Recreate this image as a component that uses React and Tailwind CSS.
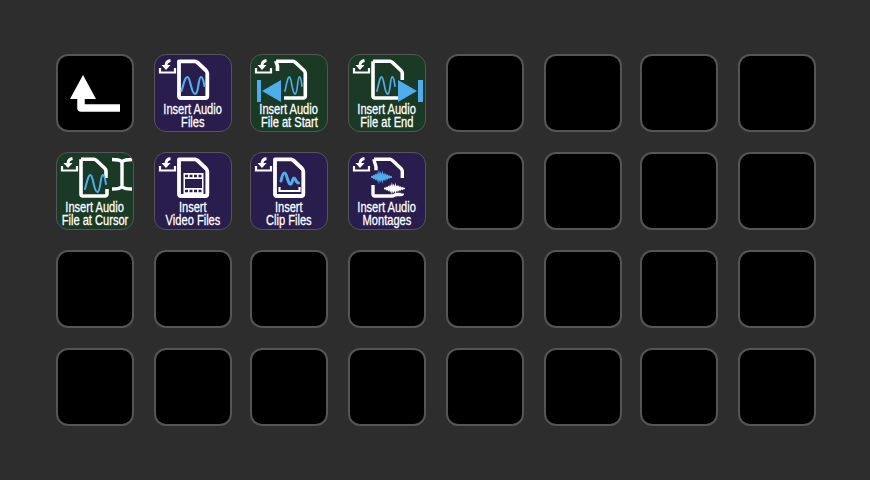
const BLUE = "#4fadee";

function TrayArrow() {
  return (
    <g fill="none" stroke="#fff">
      <path d="M6 14v4.500h15V14" strokeWidth="2.200" />
      <path d="M16.500 6.500c-3 .5-4.500 2-4.500 5" strokeWidth="2.800" />
      <path d="M7.500 11h9l-4.500 5z" fill="#fff" stroke="none" />
    </g>
  );
}

const FILE = "M25 7.300h16c1 0 1.500.3 2.500 1.200l8.500 8c1 1 1.300 1.500 1.300 3V42c0 1.500-1 2-2 2H27c-1 0-2-.5-2-2V10z";

function FileOutline() {
  return <path d={FILE} fill="none" stroke="#fff" strokeWidth="3.800" strokeLinejoin="round" />;
}

function Wave({ x, y, w = 23 }) {
  return (
    <path
      transform={`translate(${x} ${y}) scale(${w / 23} 1)`}
      d="M0 15C2.500 7 3.500 1 6 1c3 0 3.500 17 7.500 17S16.500 1 19.500 1c2 0 2.800 5 3.500 9"
      fill="none"
      stroke={BLUE}
      strokeWidth="2.200"
      strokeLinecap="round"
    />
  );
}

// amplitudes of the little waveform blobs on the montage tile
const SPIKES = [0.5, 1.500, 0.8, 2.500, 1.500, 3.500, 2, 5, 2.500, 7.500, 3, 6, 2.500, 7, 2.500, 4.500, 2, 4, 1.500, 3, 1, 2, 0.8, 1.200, 0.4];

function Spikes({ x, y, w, h = 1, fill }) {
  const step = w / (SPIKES.length - 1);
  const top = SPIKES.map((a, i) => `${x + i * step} ${y - a * h}`);
  const bottom = SPIKES.map((a, i) => `${x + i * step} ${y + a * h}`).reverse();
  return <path d={`M${top.join("L")}L${bottom.join("L")}z`} fill={fill} />;
}

function Canvas({ children, box = "1 1 76 76" }) {
  return (
    <svg viewBox={box} className="absolute inset-0 h-full w-full">
      {children}
    </svg>
  );
}

function AudioFiles() {
  return (
    <Canvas>
      <TrayArrow />
      <FileOutline />
      <Wave x={27.500} y={22} />
    </Canvas>
  );
}

function AtStart() {
  return (
    <Canvas>
      <TrayArrow />
      <path d="M26 7.300h17c1 0 1.500.3 2.500 1.200l8.500 8c1 1 1.300 1.500 1.300 3V42c0 1-1 2-2 2H34" fill="none" stroke="#fff" strokeWidth="3.600" strokeLinejoin="round" />
      <path d="M26 7.300c0 2 1.500 3 1.500 5V17" fill="none" stroke="#fff" strokeWidth="3.600" />
      <Wave x={35} y={22} w={17} />
      <path d="M7 26h4v22H7z" fill={BLUE} />
      <path d="M12 37 31 26v22z" fill={BLUE} />
    </Canvas>
  );
}

function AtEnd() {
  return (
    <Canvas>
      <TrayArrow />
      <path d="M25 7.300h17c1 0 1.500.3 2.500 1.200l8.500 8c1 1 1.300 1.500 1.300 3V26M50 44H27c-1 0-2-.5-2-2V7.300" fill="none" stroke="#fff" strokeWidth="3.600" strokeLinejoin="round" />
      <Wave x={29} y={22} w={18} />
      <path d="M70 26h5v22h-5z" fill={BLUE} />
      <path d="M69 37 50 26v22z" fill={BLUE} />
    </Canvas>
  );
}

function AtCursor() {
  return (
    <Canvas>
      <TrayArrow />
      <path d="M25 7.300h13c1 0 1.500.3 2.500 1.200l8 7.500c1 1 1.500 1.500 1.500 3v7M51 37v5c0 1-1 2-2 2H27c-1 0-2-.5-2-2V7.300" fill="none" stroke="#fff" strokeWidth="3.600" strokeLinejoin="round" />
      <Wave x={29} y={22} w={21} />
      <path d="M56 7.500c5 0 8 0 10 2.500 2-2.500 5-2.500 10-2.500M66 9v26M56 37c5 0 8 0 10-2.500 2 2.500 5 2.500 10 2.500" fill="none" stroke="#fff" strokeWidth="3.400" />
    </Canvas>
  );
}

function VideoFiles() {
  return (
    <Canvas>
      <TrayArrow />
      <FileOutline />
      <rect x="29.500" y="21" width="20" height="21" fill="#fff" />
      <path d="M31 27h17v9H31z" fill="#291d4d" />
      <path d="M31 24h3M35.500 24h3M40 24h3M44.500 24h3M31 39h3M35.500 39h3M40 39h3M44.500 39h3" stroke="#291d4d" strokeWidth="2.600" />
    </Canvas>
  );
}

function ClipFiles() {
  return (
    <Canvas>
      <TrayArrow />
      <FileOutline />
      <path d="M31 29c1-5 2-8 3.500-8s2 3 3 6 2 6 3.500 5 1.500-6 3-6 2 5 4.500 5" fill="none" stroke={BLUE} strokeWidth="3" strokeLinecap="round" />
      <path d="M29.500 35v4h20v-4" fill="none" stroke="#fff" strokeWidth="2.200" />
    </Canvas>
  );
}

function Montages() {
  return (
    <Canvas>
      <TrayArrow />
      <path d="M26 7.300h16c1 0 1.500.3 2.500 1.200l8.500 8c1 1 1.300 1.500 1.300 3V26M25 33v9c0 1.500 1 2 2 2h17c2 0 3-1.500 5-1.500h4c1 0 1.300-.5 1.300-1" fill="none" stroke="#fff" strokeWidth="3.400" strokeLinejoin="round" />
      <path d="M26 7.300c0 3 2 5 2 8v3" fill="none" stroke="#fff" strokeWidth="3.400" />
      <Spikes x={23} y={25} w={21} fill={BLUE} />
      <Spikes x={36} y={36.500} w={21} h={0.85} fill="#fff" />
    </Canvas>
  );
}

function BackArrow() {
  return (
    <Canvas box="2 2 74 74">
      <path d="M25 40v14h39" fill="none" stroke="#fff" strokeWidth="7.500" strokeLinejoin="round" />
      <path d="M14 45 27 21l13 24z" fill="#fff" />
    </Canvas>
  );
}

const PURPLE = "bg-[#291d4d]";
const GREEN = "bg-[#1b3a26]";

const tiles = [
  { icon: BackArrow },
  { icon: AudioFiles, bg: PURPLE, lines: ["Insert Audio", "Files"] },
  { icon: AtStart, bg: GREEN, lines: ["Insert Audio", "File at Start"] },
  { icon: AtEnd, bg: GREEN, lines: ["Insert Audio", "File at End"] },
  {}, {}, {}, {},
  { icon: AtCursor, bg: GREEN, lines: ["Insert Audio", "File at Cursor"] },
  { icon: VideoFiles, bg: PURPLE, lines: ["Insert", "Video Files"] },
  { icon: ClipFiles, bg: PURPLE, lines: ["Insert", "Clip Files"] },
  { icon: Montages, bg: PURPLE, lines: ["Insert Audio", "Montages"] },
  {}, {}, {}, {},
  ...Array(16).fill({}),
];

function Tile({ icon: Icon, bg, lines }) {
  return (
    <div className={`relative h-[78px] w-[78px] overflow-hidden rounded-[12px] ${bg ? `border border-[#555555] ${bg}` : "border-2 border-[#555555] bg-black"}`}>
      {Icon && <Icon />}
      {lines && (
        <div className="absolute inset-x-0 bottom-[3px] flex flex-col items-center font-['Liberation_Sans',sans-serif] text-[15px] leading-[12.500px] text-white [-webkit-text-stroke:0.3px_white]">
          {lines.map((l) => (
            <div key={l} className="scale-x-[.74] whitespace-nowrap">
              {l}
            </div>
          ))}
        </div>
      )}
    </div>
  );
}

export default function App() {
  return (
    <div className="h-[480px] w-[870px] overflow-hidden bg-[#2d2d2d] pl-[56px] pt-[54px]">
      <div className="grid grid-cols-[98px_96px_98px_98px_98px_96px_98px_78px] grid-rows-[98px_98px_98px_78px]">
        {tiles.map((t, i) => (
          <Tile key={i} {...t} />
        ))}
      </div>
    </div>
  );
}
